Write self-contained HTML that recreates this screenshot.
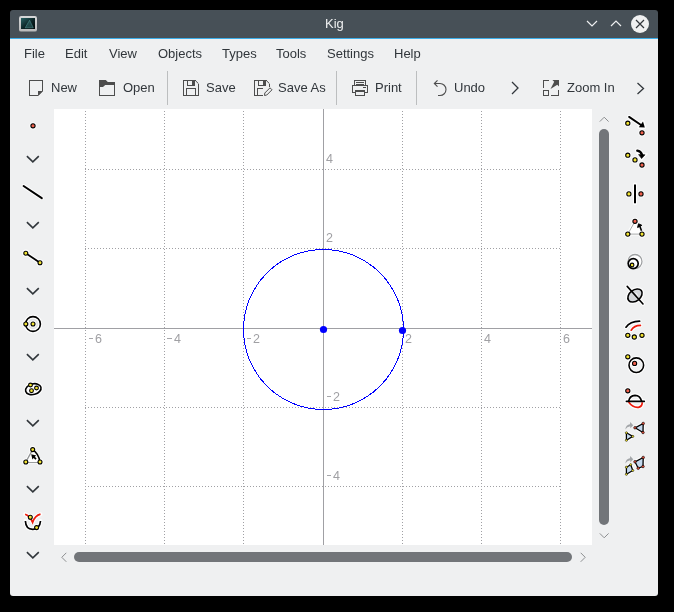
<!DOCTYPE html>
<html><head><meta charset="utf-8">
<style>
html,body{margin:0;padding:0;width:674px;height:612px;overflow:hidden;background:#000;}
*{box-sizing:border-box;}
.a{position:absolute;}
.t{position:absolute;font-family:"Liberation Sans",sans-serif;font-size:13px;line-height:15px;white-space:pre;color:#31363b;will-change:transform;}
#win{position:absolute;left:10px;top:10px;width:648px;height:586px;background:linear-gradient(to bottom,#475057 0,#475057 28px,#3daee9 28px,#3daee9 29px,#eff0f1 29px);border-radius:3px;overflow:hidden;}


.lb{position:absolute;font-family:"Liberation Sans",sans-serif;font-size:12.5px;line-height:14px;white-space:pre;color:#a0a0a4;letter-spacing:1px;will-change:transform}
.sep{position:absolute;top:71px;width:1px;height:34px;background:#bcbebf;}
</style></head>
<body>
<div id="win"></div>

<!-- title icon -->
<svg class="a" style="left:18px;top:15px" width="20" height="18">
<defs><linearGradient id="scr" x1="0" y1="0" x2="1" y2="1"><stop offset="0" stop-color="#2a6466"/><stop offset="0.55" stop-color="#0b2224"/><stop offset="1" stop-color="#020606"/></linearGradient>
<linearGradient id="frm" x1="0" y1="0" x2="0" y2="1"><stop offset="0" stop-color="#d6d7d8"/><stop offset="1" stop-color="#b9babb"/></linearGradient></defs>
<rect x="1" y="1" width="18" height="15.6" rx="2.2" fill="url(#frm)"/>
<rect x="3" y="3" width="14" height="11" fill="url(#scr)"/>
<path d="M11.6 5.2 L7.2 12.8 L15.3 12.8 Z" fill="#4f9a9a" fill-opacity="0.35" stroke="#5aa8a8" stroke-opacity="0.55" stroke-width="0.8"/>
</svg>
<div class="t" style="left:325px;top:16px;color:#eff0f1">Kig</div>

<!-- window buttons -->
<svg class="a" style="left:584px;top:18px" width="16" height="12"><path d="M3 3 L8 8 L13 3" fill="none" stroke="#eff0f1" stroke-width="1.2"/></svg>
<svg class="a" style="left:608px;top:17px" width="16" height="12"><path d="M3 9 L8 4 L13 9" fill="none" stroke="#eff0f1" stroke-width="1.2"/></svg>
<svg class="a" style="left:630px;top:14px" width="20" height="20"><circle cx="10" cy="10" r="9" fill="#eff0f1"/><path d="M6 6 L14 14 M14 6 L6 14" stroke="#31363b" stroke-width="1.2"/></svg>

<!-- menu -->
<div class="t" style="left:24px;top:46px">File</div>
<div class="t" style="left:65px;top:46px">Edit</div>
<div class="t" style="left:109px;top:46px">View</div>
<div class="t" style="left:158px;top:46px">Objects</div>
<div class="t" style="left:222px;top:46px">Types</div>
<div class="t" style="left:276px;top:46px">Tools</div>
<div class="t" style="left:327px;top:46px">Settings</div>
<div class="t" style="left:394px;top:46px">Help</div>

<!-- toolbar -->
<div class="sep" style="left:167px"></div>
<div class="sep" style="left:336px"></div>
<div class="sep" style="left:416px"></div>
<div class="t" style="left:51px;top:80px">New</div>
<div class="t" style="left:123px;top:80px">Open</div>
<div class="t" style="left:206px;top:80px">Save</div>
<div class="t" style="left:278px;top:80px">Save As</div>
<div class="t" style="left:375px;top:80px">Print</div>
<div class="t" style="left:454px;top:80px">Undo</div>
<div class="t" style="left:567px;top:80px">Zoom In</div>


<!-- toolbar icons -->
<svg class="a" style="left:0;top:0" width="674" height="612" fill="none" stroke="#4d4d4d" stroke-width="1" shape-rendering="crispEdges">
<path d="M42.5 91 V80.5 H29.5 V95.5 H38"/><path d="M42.5 91 L38 95.5" shape-rendering="auto"/>
<path d="M38 91 H43 L38 96 Z" fill="#4d4d4d" stroke="none" shape-rendering="auto"/>
<path d="M99 80 H105.8 L107.8 82 H115 V85 H105.2 L103 87 H99 Z" fill="#4d4d4d" stroke="none" shape-rendering="auto"/>
<path d="M99.5 80.5 V95.5 H114.5 V82.5"/>
<path d="M195.5 80.5 H183.5 V95.5 H198.5 V83.5"/><path d="M195.3 80.5 L198.5 83.7" shape-rendering="auto"/>
<path d="M187.5 80.5 V85.5 H194.5 V80.5"/>
<rect x="192" y="81" width="2" height="4" fill="#4d4d4d" stroke="none"/>
<path d="M186.5 95.5 V88.5 H195.5 V95.5"/>
<path d="M262.8 95.5 H254.5 V80.5 H266.5"/><path d="M266.3 80.5 L269.5 83.7" shape-rendering="auto"/><path d="M269.5 83.5 V86.8"/>
<path d="M258.5 80.5 V85.5 H265.5 V80.5"/>
<rect x="263" y="81" width="2" height="4" fill="#4d4d4d" stroke="none"/>
<path d="M257.5 95.5 V88.5 H262.8"/>
<path d="M264.5 95.5 L264.8 93 L270 87.8 L272 89.8 L266.8 95 Z" stroke-linejoin="round" shape-rendering="auto"/>
<path d="M354.5 85.5 V80.5 H365.5 V85.5"/>
<path d="M356 82.5 H364 M356 84.5 H364"/>
<path d="M355.5 92.5 H352.5 V85.5 H367.5 V92.5 H364.5"/>
<path d="M363 87.5 H366" stroke-width="1.2"/>
<path d="M355.5 90.5 H364.5 V95.5 H355.5 Z"/>
<rect x="355" y="90" width="10" height="2" fill="#4d4d4d" stroke="none"/>
<path d="M437.5 80.3 L434.3 83.5 L437.5 86.7 M434.5 83.5 H440 A6 6 0 0 1 440 95.5 H438" stroke-width="1.1" shape-rendering="auto"/>
<path d="M543.5 88 V80.5 H549"/>
<rect x="543.5" y="90.5" width="5" height="5"/>
<path d="M551 95.5 H558.5 V90"/>
<path d="M552.4 80 H559 V86.5 L557.3 84.8 L550.5 89 L554.2 81.8 Z" fill="#4d4d4d" stroke="none" shape-rendering="auto"/>
<path d="M512 82 L518 88 L512 94" stroke="#31363b" stroke-width="1.3" shape-rendering="auto"/>
<path d="M637.5 83 L643.5 88.5 L637.5 94" stroke="#31363b" stroke-width="1.3" shape-rendering="auto"/>
</svg>

<!-- left toolbar -->
<svg class="a" style="left:0;top:0" width="674" height="612" fill="none">
<g opacity="0.9"><circle cx="33" cy="125.8" r="3.6" fill="#fff"/>
<path d="M23.6 186 L41.8 198.2" stroke="#fff" stroke-linecap="round" stroke-linejoin="round" stroke-width="4"/>
<path d="M25.8 253.2 L40 262.8" stroke="#fff" stroke-linecap="round" stroke-linejoin="round" stroke-width="4"/>
<circle cx="25.8" cy="253.2" r="3.6" fill="#fff"/>
<circle cx="40" cy="262.8" r="3.6" fill="#fff"/>
<circle cx="33" cy="324" r="7.4" stroke="#fff" stroke-width="4"/>
<circle cx="25.8" cy="324" r="3.6" fill="#fff"/>
<circle cx="33" cy="324" r="3.6" fill="#fff"/>
<ellipse cx="33.3" cy="389.2" rx="7.9" ry="5.3" transform="rotate(-15 33.3 389.2)" stroke="#fff" stroke-width="4"/>
<circle cx="30.5" cy="385" r="3.6" fill="#fff"/>
<circle cx="36.5" cy="388" r="3.6" fill="#fff"/>
<circle cx="31.5" cy="390.7" r="3.6" fill="#fff"/>
<path d="M32.7 449.6 L25.8 462 L40 462 Z" stroke="#fff" stroke-width="3" stroke-linejoin="round" fill="#fff"/>
<circle cx="32.7" cy="449.6" r="3.6" fill="#fff"/>
<circle cx="25.8" cy="462" r="3.6" fill="#fff"/>
<circle cx="40" cy="462" r="3.6" fill="#fff"/>
<path d="M25.1 514.2 Q29.5 515.5 32.6 522.4 Q35 515.5 40.5 514.2" stroke="#fff" stroke-linecap="round" stroke-linejoin="round" stroke-width="4"/>
<path d="M25.4 521 Q25.8 529.5 33 529.3 Q39.8 529 40.5 521" stroke="#fff" stroke-linecap="round" stroke-linejoin="round" stroke-width="4"/>
<circle cx="30.3" cy="517.3" r="3.6" fill="#fff"/>
<circle cx="36.6" cy="527.6" r="3.6" fill="#fff"/></g>
<path d="M26.9 156.2 L32.85 161.79999999999998 L38.8 156.2" stroke="#31363b" stroke-width="1.6"/>
<path d="M26.9 222.2 L32.85 227.79999999999998 L38.8 222.2" stroke="#31363b" stroke-width="1.6"/>
<path d="M26.9 288.2 L32.85 293.8 L38.8 288.2" stroke="#31363b" stroke-width="1.6"/>
<path d="M26.9 354.2 L32.85 359.8 L38.8 354.2" stroke="#31363b" stroke-width="1.6"/>
<path d="M26.9 420.2 L32.85 425.8 L38.8 420.2" stroke="#31363b" stroke-width="1.6"/>
<path d="M26.9 486.2 L32.85 491.8 L38.8 486.2" stroke="#31363b" stroke-width="1.6"/>
<path d="M26.9 552.2 L32.85 557.8000000000001 L38.8 552.2" stroke="#31363b" stroke-width="1.6"/>
<circle cx="33" cy="125.8" r="2.1" fill="#f0604c" stroke="#000" stroke-width="1.1"/>
<path d="M23.6 186 L41.8 198.2" stroke="#000" stroke-width="2" stroke-linecap="round"/>
<path d="M25.8 253.2 L40 262.8" stroke="#000" stroke-width="1.8"/>
<circle cx="25.8" cy="253.2" r="2.0" fill="#f3e431" stroke="#000" stroke-width="1.1"/>
<circle cx="40" cy="262.8" r="2.0" fill="#f3e431" stroke="#000" stroke-width="1.1"/>
<circle cx="33" cy="324" r="4.3" stroke="#e2e3e4" stroke-width="1.2"/><circle cx="33" cy="324" r="7.4" stroke="#000" stroke-width="1.6"/>
<circle cx="25.8" cy="324" r="2.0" fill="#f3e431" stroke="#000" stroke-width="1.1"/>
<circle cx="33" cy="324" r="2.0" fill="#f3e431" stroke="#000" stroke-width="1.1"/>
<ellipse cx="33.3" cy="389.2" rx="7.9" ry="5.3" transform="rotate(-15 33.3 389.2)" stroke="#000" stroke-width="1.6"/>
<circle cx="30.5" cy="385" r="1.9" fill="#f3e431" stroke="#000" stroke-width="1.1"/>
<circle cx="36.5" cy="388" r="1.9" fill="#f3e431" stroke="#000" stroke-width="1.1"/>
<circle cx="31.5" cy="390.7" r="1.9" fill="#f3e431" stroke="#000" stroke-width="1.1"/>
<path d="M32.7 449.6 L25.8 462" stroke="#8e9092" stroke-width="1.3"/><path d="M25.8 462.5 L40 462.5" stroke="#9a9c9e" stroke-width="1"/>
<path d="M32.7 449.6 Q38.6 453.5 40 462" stroke="#000" stroke-width="1.6"/>
<path d="M31.2 454.2 L36.3 455.6 L34.8 456.8 L36.6 458.6 L35.4 459.8 L33.6 458 L32.4 459.4 Z" fill="#000"/>
<circle cx="32.7" cy="449.6" r="2.0" fill="#f3e431" stroke="#000" stroke-width="1.1"/>
<circle cx="25.8" cy="462" r="2.0" fill="#f3e431" stroke="#000" stroke-width="1.1"/>
<circle cx="40" cy="462" r="2.0" fill="#f3e431" stroke="#000" stroke-width="1.1"/>
<path d="M25.1 514.2 Q29.5 515.5 32.6 522.4 Q35 515.5 40.5 514.2" stroke="#ee1b0c" stroke-width="1.7"/>
<path d="M25.4 521 Q25.8 529.5 33 529.3 Q39.8 529 40.5 521" stroke="#000" stroke-width="1.7"/>
<circle cx="30.3" cy="517.3" r="2.0" fill="#f3e431" stroke="#000" stroke-width="1.1"/>
<circle cx="36.6" cy="527.6" r="2.0" fill="#f3e431" stroke="#000" stroke-width="1.1"/>
</svg>
<!-- canvas -->
<div class="a" style="left:54px;top:109px;width:538px;height:436px;background:#fff"></div>
<svg class="a" style="left:0;top:0" width="674" height="612" fill="none">
<path d="M85.5 111 V544" stroke="#a0a0a4" stroke-dasharray="1 2"/>
<path d="M164.5 111 V544" stroke="#a0a0a4" stroke-dasharray="1 2"/>
<path d="M243.5 111 V544" stroke="#a0a0a4" stroke-dasharray="1 2"/>
<path d="M402.5 111 V544" stroke="#a0a0a4" stroke-dasharray="1 2"/>
<path d="M481.5 111 V544" stroke="#a0a0a4" stroke-dasharray="1 2"/>
<path d="M560.5 111 V544" stroke="#a0a0a4" stroke-dasharray="1 2"/>
<path d="M85 169.5 H561" stroke="#a0a0a4" stroke-dasharray="1 2"/>
<path d="M85 248.5 H561" stroke="#a0a0a4" stroke-dasharray="1 2"/>
<path d="M85 407.5 H561" stroke="#a0a0a4" stroke-dasharray="1 2"/>
<path d="M85 486.5 H561" stroke="#a0a0a4" stroke-dasharray="1 2"/>
<path d="M54 328.5 H592 M323.5 109 V545" stroke="#a0a0a4"/>
<circle cx="323.5" cy="329.5" r="80" stroke="#0000ff" shape-rendering="crispEdges"/>
<circle cx="323.5" cy="329.5" r="3.6" fill="#0000ff"/>
<circle cx="402.5" cy="330.5" r="3.6" fill="#0000ff"/>
</svg>
<div class="a" style="left:88.6px;top:338px;width:4.5px;height:1px;background:#a6a6aa"></div>
<div class="lb" style="left:95.0px;top:332px">6</div>
<div class="a" style="left:167.4px;top:338px;width:4.5px;height:1px;background:#a6a6aa"></div>
<div class="lb" style="left:173.8px;top:332px">4</div>
<div class="a" style="left:246.7px;top:338px;width:4.5px;height:1px;background:#a6a6aa"></div>
<div class="lb" style="left:253.1px;top:332px">2</div>
<div class="lb" style="left:405px;top:332px">2</div>
<div class="lb" style="left:484px;top:332px">4</div>
<div class="lb" style="left:563px;top:332px">6</div>
<div class="lb" style="left:326px;top:152px">4</div>
<div class="lb" style="left:326px;top:231px">2</div>
<div class="a" style="left:326.5px;top:396px;width:4.5px;height:1px;background:#a6a6aa"></div>
<div class="lb" style="left:332.9px;top:390px">2</div>
<div class="a" style="left:326.5px;top:475px;width:4.5px;height:1px;background:#a6a6aa"></div>
<div class="lb" style="left:332.9px;top:469px">4</div>
<!-- scrollbars -->
<div class="a" style="left:599px;top:129px;width:10px;height:396px;border-radius:5px;background:#727579"></div>
<div class="a" style="left:74px;top:552px;width:498px;height:10px;border-radius:5px;background:#727579"></div>
<svg class="a" style="left:0;top:0" width="674" height="612" fill="none" stroke="#8c8e90" stroke-width="1">
<path d="M599.8 121.6 L604.2 117.2 L608.6 121.6"/>
<path d="M599.8 533.4 L604.2 537.8 L608.6 533.4"/>
<path d="M66.3 552.8 L61.8 557.3 L66.3 561.8"/>
<path d="M580.7 552.8 L585.2 557.3 L580.7 561.8"/>
</svg>
<!-- right toolbar -->
<svg class="a" style="left:0;top:0" width="674" height="612" fill="none">
<g opacity="0.9"><path d="M629.1 116.9 L642.5 126" stroke="#fff" stroke-linecap="round" stroke-linejoin="round" stroke-width="4"/>
<path d="M644.8 127.4 L638.8 127.2 L643 121.5 Z" fill="#fff" stroke="#fff" stroke-width="3" stroke-linejoin="round"/>
<circle cx="627.8" cy="123.2" r="3.6" fill="#fff"/>
<circle cx="642" cy="132.8" r="3.6" fill="#fff"/>
<path d="M637.3 150.6 Q640.8 151.2 642 154.6" stroke="#fff" stroke-linecap="round" stroke-linejoin="round" stroke-width="4.5"/>
<path d="M638.6 154.6 L645 154.8 L641.6 158.6 Z" fill="#fff" stroke="#fff" stroke-width="3"/>
<circle cx="627.8" cy="155.2" r="3.6" fill="#fff"/>
<circle cx="635" cy="159.9" r="3.6" fill="#fff"/>
<circle cx="642" cy="165" r="3.6" fill="#fff"/>
<path d="M635 184.4 V203.3" stroke="#fff" stroke-linecap="round" stroke-linejoin="round" stroke-width="4"/>
<circle cx="628.9" cy="193.9" r="3.6" fill="#fff"/>
<circle cx="641" cy="193.9" r="3.6" fill="#fff"/>
<path d="M635 221.3 L627.8 234.1 L642 234.1 Z" stroke="#fff" stroke-width="3" fill="#fff"/>
<circle cx="635" cy="221.3" r="3.6" fill="#fff"/>
<circle cx="627.8" cy="234.1" r="3.6" fill="#fff"/>
<circle cx="642" cy="234.1" r="3.6" fill="#fff"/>
<circle cx="635" cy="261.5" r="8.2" fill="#fff"/>
<circle cx="632.1" cy="264.9" r="3.6" fill="#fff"/>
<path d="M627.2 286.4 L643 304" stroke="#fff" stroke-width="4" stroke-linecap="round"/><ellipse cx="635" cy="295.5" rx="8" ry="5.5" transform="rotate(-38 635 295.5)" stroke="#fff" stroke-width="4"/>
<path d="M626 327.2 Q630 321.5 639.6 321.2" stroke="#fff" stroke-linecap="round" stroke-linejoin="round" stroke-width="4"/>
<path d="M631.2 330.2 Q634 325.5 640.4 325.4" stroke="#fff" stroke-linecap="round" stroke-linejoin="round" stroke-width="4"/>
<circle cx="627.8" cy="335.3" r="3.6" fill="#fff"/>
<circle cx="634.3" cy="337" r="3.6" fill="#fff"/>
<circle cx="642" cy="335.3" r="3.6" fill="#fff"/>
<circle cx="636.3" cy="365.2" r="7.5" stroke="#fff" stroke-width="3.5"/>
<circle cx="627.8" cy="356.8" r="3.6" fill="#fff"/>
<circle cx="634.6" cy="363.4" r="3.6" fill="#fff"/>
<path d="M626.4 401.3 H644.3" stroke="#fff" stroke-width="4" stroke-linecap="round"/><path d="M628.6 401 Q630 395.3 635 395.3 Q640.2 395.3 641.6 401" stroke="#fff" stroke-width="4"/><path d="M628.6 402 Q633 408 638.5 407.3 Q642.5 406.5 642.2 402.3" stroke="#fff" stroke-width="4"/>
<circle cx="627.8" cy="390.8" r="3.6" fill="#fff"/>
<path d="M635 427.8 L643.2 423.5 L643 432.5 Z M626.4 432.8 L632.8 436.4 L626.4 440.3 Z" fill="#fff" stroke="#fff" stroke-width="3.5" stroke-linejoin="round"/>
<path d="M635 461.8 L643.2 457.5 L643 466.5 L638.2 468.2 Z M626.4 467.2 L630.7 464.7 L632.8 470.5 L626.4 474.3 Z" fill="#fff" stroke="#fff" stroke-width="3.5" stroke-linejoin="round"/></g>
<path d="M629.1 116.9 L642.5 126" stroke="#000" stroke-width="1.9" stroke-linecap="round"/>
<path d="M644.8 127.4 L638.8 127.2 L643 121.5 Z" fill="#000"/>
<circle cx="627.8" cy="123.2" r="2.1" fill="#f3e431" stroke="#000" stroke-width="1.1"/>
<circle cx="642" cy="132.8" r="2.1" fill="#f0604c" stroke="#000" stroke-width="1.1"/>
<path d="M637.3 150.6 Q640.8 151.2 642 154.6" stroke="#000" stroke-width="2.4" stroke-linecap="round"/>
<path d="M638.6 154.6 L645 154.8 L641.6 158.6 Z" fill="#000" stroke="#000" stroke-width="0.6" stroke-linejoin="round"/>
<circle cx="627.8" cy="155.2" r="2.1" fill="#f3e431" stroke="#000" stroke-width="1.1"/>
<circle cx="635" cy="159.9" r="2.1" fill="#f3e431" stroke="#000" stroke-width="1.1"/>
<circle cx="642" cy="165" r="2.1" fill="#f0604c" stroke="#000" stroke-width="1.1"/>
<path d="M635 184.4 V203.3" stroke="#000" stroke-width="2"/>
<circle cx="628.9" cy="193.9" r="2.1" fill="#f3e431" stroke="#000" stroke-width="1.1"/>
<circle cx="641" cy="193.9" r="2.1" fill="#f0604c" stroke="#000" stroke-width="1.1"/>
<path d="M635 221.3 L627.8 234.1 L642 234.1" stroke="#a8a9aa" stroke-width="1"/>
<path d="M641.5 230.8 L639.6 225.7" stroke="#000" stroke-width="1.6"/>
<path d="M637.6 227.5 L638.5 223.8 L641.8 225.3 Z" fill="#000" stroke="#000" stroke-width="1"/>
<circle cx="635" cy="221.3" r="2.1" fill="#f0604c" stroke="#000" stroke-width="1.1"/>
<circle cx="627.8" cy="234.1" r="2.1" fill="#f3e431" stroke="#000" stroke-width="1.1"/>
<circle cx="642" cy="234.1" r="2.1" fill="#f3e431" stroke="#000" stroke-width="1.1"/>
<circle cx="635" cy="261.5" r="7" stroke="#9ea0a2" stroke-width="1.3"/>
<circle cx="633.2" cy="263.6" r="5" stroke="#000" stroke-width="1.7"/>
<circle cx="632.1" cy="264.9" r="1.8" fill="#f3e431" stroke="#000" stroke-width="1.1"/>
<ellipse cx="635" cy="295.5" rx="8" ry="5.5" transform="rotate(-38 635 295.5)" fill="#d3d6da" stroke="#000" stroke-width="1.6"/>
<path d="M635.5 293 Q638.5 295.5 637 299" stroke="#eef0f2" stroke-width="1.5"/>
<path d="M627.2 286.4 L643 304" stroke="#000" stroke-width="1.6" stroke-linecap="round"/>
<path d="M626 327.2 Q630 321.5 639.6 321.2" stroke="#000" stroke-width="1.7" stroke-linecap="round"/>
<path d="M631.2 330.2 Q634 325.5 640.4 325.4" stroke="#ee1b0c" stroke-width="1.7" stroke-linecap="round"/>
<circle cx="627.8" cy="335.3" r="2.1" fill="#f3e431" stroke="#000" stroke-width="1.1"/>
<circle cx="634.3" cy="337" r="2.1" fill="#f3e431" stroke="#000" stroke-width="1.1"/>
<circle cx="642" cy="335.3" r="2.1" fill="#f3e431" stroke="#000" stroke-width="1.1"/>
<circle cx="636.3" cy="365.2" r="7.3" stroke="#000" stroke-width="1.6"/>
<circle cx="627.8" cy="356.8" r="2.1" fill="#f3e431" stroke="#000" stroke-width="1.1"/>
<circle cx="634.6" cy="363.4" r="2.1" fill="#f0604c" stroke="#000" stroke-width="1.1"/>
<path d="M628.6 401.3 Q629.6 395.5 635 395.3 Q640.2 395.3 641.6 401.3" stroke="#000" stroke-width="1.7"/>
<path d="M628.6 402 Q633 408 638.5 407.3 Q642.5 406.5 642.2 402.3" stroke="#ee1b0c" stroke-width="1.7"/>
<path d="M626.4 401.3 H644.3" stroke="#000" stroke-width="1.7" stroke-linecap="round"/>
<circle cx="627.8" cy="390.8" r="2.1" fill="#f0604c" stroke="#000" stroke-width="1.1"/>
<path d="M625.3 429.5 Q626 424.5 630 424.3 L630.2 422 L633.2 425.2 L630.4 428.3 L630.2 426.2 Q627 426.6 625.3 429.5 Z" fill="#a2a5a8"/>
<path d="M635 427.8 L643.2 423.5 L643 432.5 Z" fill="#c5d9ee" stroke="#000" stroke-width="1.3" stroke-linejoin="round"/>
<path d="M626.4 432.8 L632.8 436.4 L626.4 440.3 Z" fill="#c5d9ee" stroke="#000" stroke-width="1.3" stroke-linejoin="round"/>
<circle cx="635" cy="427.8" r="1.3" fill="#e0503c" stroke="#000" stroke-width="0.6"/>
<circle cx="643.2" cy="423.5" r="1.3" fill="#e0503c" stroke="#000" stroke-width="0.6"/>
<circle cx="643" cy="432.5" r="1.3" fill="#e0503c" stroke="#000" stroke-width="0.6"/>
<circle cx="626.4" cy="432.8" r="1.1" fill="#f3e431" stroke="#000" stroke-width="0.5"/>
<circle cx="632.8" cy="436.4" r="1.1" fill="#f3e431" stroke="#000" stroke-width="0.5"/>
<circle cx="626.4" cy="440.3" r="1.1" fill="#f3e431" stroke="#000" stroke-width="0.5"/>
<path d="M625.3 463.5 Q626 458.5 630 458.3 L630.2 456 L633.2 459.2 L630.4 462.3 L630.2 460.2 Q627 460.6 625.3 463.5 Z" fill="#a2a5a8"/>
<path d="M635 461.8 L643.2 457.5 L643 466.5 L638.2 468.2 Z" fill="#c5d9ee" stroke="#000" stroke-width="1.3" stroke-linejoin="round"/>
<path d="M626.4 467.2 L630.7 464.7 L632.8 470.5 L626.4 474.3 Z" fill="#c5d9ee" stroke="#000" stroke-width="1.3" stroke-linejoin="round"/>
<circle cx="635" cy="461.8" r="1.3" fill="#e0503c" stroke="#000" stroke-width="0.6"/>
<circle cx="643.2" cy="457.5" r="1.3" fill="#e0503c" stroke="#000" stroke-width="0.6"/>
<circle cx="643" cy="466.5" r="1.3" fill="#e0503c" stroke="#000" stroke-width="0.6"/>
<circle cx="638.2" cy="468.2" r="1.3" fill="#e0503c" stroke="#000" stroke-width="0.6"/>
<circle cx="626.4" cy="467.2" r="1.1" fill="#f3e431" stroke="#000" stroke-width="0.5"/>
<circle cx="630.7" cy="464.7" r="1.1" fill="#f3e431" stroke="#000" stroke-width="0.5"/>
<circle cx="632.8" cy="470.5" r="1.1" fill="#f3e431" stroke="#000" stroke-width="0.5"/>
<circle cx="626.4" cy="474.3" r="1.1" fill="#f3e431" stroke="#000" stroke-width="0.5"/>
</svg>
</body></html>
